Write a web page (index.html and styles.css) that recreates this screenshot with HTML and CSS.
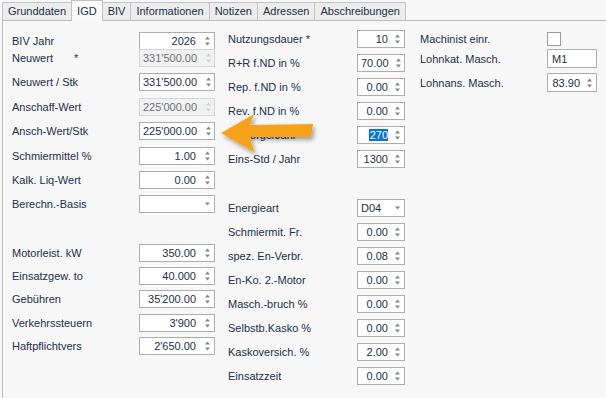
FILE: index.html
```html
<!DOCTYPE html>
<html lang="de">
<head>
<meta charset="utf-8">
<title>IGD</title>
<link rel="stylesheet" href="styles.css">
</head>
<body>
<div class="tabs">
  <div class="tab">Grunddaten</div>
  <div class="tab active">IGD</div>
  <div class="tab">BIV</div>
  <div class="tab">Informationen</div>
  <div class="tab">Notizen</div>
  <div class="tab">Adressen</div>
  <div class="tab">Abschreibungen</div>
</div>

<div class="panel">
  <div class="col col-left">
    <div class="grp grp-a">
      <div class="pair">
        <div class="row"><span class="lbl">BIV Jahr</span><div class="field spin"><span class="val">2026</span><svg class="sp" viewBox="0 0 7 14"><polygon points="1,5.5 3.5,2.5 6,5.5"/><polygon points="1,8.5 3.5,11.5 6,8.5"/></svg></div></div>
        <div class="row overlap"><span class="lbl">Neuwert<span class="req">*</span></span><div class="field spin disabled"><span class="val">331'500.00</span><svg class="sp" viewBox="0 0 7 14"><polygon points="1,5.5 3.5,2.5 6,5.5"/><polygon points="1,8.5 3.5,11.5 6,8.5"/></svg></div></div>
      </div>
      <div class="row"><span class="lbl">Neuwert / Stk</span><div class="field spin"><span class="val">331'500.00</span><svg class="sp" viewBox="0 0 7 14"><polygon points="1,5.5 3.5,2.5 6,5.5"/><polygon points="1,8.5 3.5,11.5 6,8.5"/></svg></div></div>
      <div class="row"><span class="lbl">Anschaff-Wert</span><div class="field spin disabled"><span class="val">225'000.00</span><svg class="sp" viewBox="0 0 7 14"><polygon points="1,5.5 3.5,2.5 6,5.5"/><polygon points="1,8.5 3.5,11.5 6,8.5"/></svg></div></div>
      <div class="row"><span class="lbl">Ansch-Wert/Stk</span><div class="field spin"><span class="val">225'000.00</span><svg class="sp" viewBox="0 0 7 14"><polygon points="1,5.5 3.5,2.5 6,5.5"/><polygon points="1,8.5 3.5,11.5 6,8.5"/></svg></div></div>
      <div class="row"><span class="lbl">Schmiermittel %</span><div class="field spin"><span class="val">1.00</span><svg class="sp" viewBox="0 0 7 14"><polygon points="1,5.5 3.5,2.5 6,5.5"/><polygon points="1,8.5 3.5,11.5 6,8.5"/></svg></div></div>
      <div class="row"><span class="lbl">Kalk. Liq-Wert</span><div class="field spin"><span class="val">0.00</span><svg class="sp" viewBox="0 0 7 14"><polygon points="1,5.5 3.5,2.5 6,5.5"/><polygon points="1,8.5 3.5,11.5 6,8.5"/></svg></div></div>
      <div class="row"><span class="lbl">Berechn.-Basis</span><div class="field combo"><span class="val"></span><svg class="dd" viewBox="0 0 7 4"><polygon points="1,0.5 6,0.5 3.5,3.5"/></svg></div></div>
    </div>
    <div class="grp grp-b">
      <div class="row"><span class="lbl">Motorleist. kW</span><div class="field spin"><span class="val">350.00</span><svg class="sp" viewBox="0 0 7 14"><polygon points="1,5.5 3.5,2.5 6,5.5"/><polygon points="1,8.5 3.5,11.5 6,8.5"/></svg></div></div>
      <div class="row"><span class="lbl">Einsatzgew. to</span><div class="field spin"><span class="val">40.000</span><svg class="sp" viewBox="0 0 7 14"><polygon points="1,5.5 3.5,2.5 6,5.5"/><polygon points="1,8.5 3.5,11.5 6,8.5"/></svg></div></div>
      <div class="row"><span class="lbl">Gebühren</span><div class="field spin"><span class="val">35'200.00</span><svg class="sp" viewBox="0 0 7 14"><polygon points="1,5.5 3.5,2.5 6,5.5"/><polygon points="1,8.5 3.5,11.5 6,8.5"/></svg></div></div>
      <div class="row"><span class="lbl">Verkehrssteuern</span><div class="field spin"><span class="val">3'900</span><svg class="sp" viewBox="0 0 7 14"><polygon points="1,5.5 3.5,2.5 6,5.5"/><polygon points="1,8.5 3.5,11.5 6,8.5"/></svg></div></div>
      <div class="row"><span class="lbl">Haftpflichtvers</span><div class="field spin"><span class="val">2'650.00</span><svg class="sp" viewBox="0 0 7 14"><polygon points="1,5.5 3.5,2.5 6,5.5"/><polygon points="1,8.5 3.5,11.5 6,8.5"/></svg></div></div>
    </div>
  </div>

  <div class="col col-mid">
    <div class="grp grp-a">
      <div class="row"><span class="lbl">Nutzungsdauer *</span><div class="field spin"><span class="val">10</span><svg class="sp" viewBox="0 0 7 14"><polygon points="1,5.5 3.5,2.5 6,5.5"/><polygon points="1,8.5 3.5,11.5 6,8.5"/></svg></div></div>
      <div class="row"><span class="lbl">R+R f.ND in %</span><div class="field spin"><span class="val">70.00</span><svg class="sp" viewBox="0 0 7 14"><polygon points="1,5.5 3.5,2.5 6,5.5"/><polygon points="1,8.5 3.5,11.5 6,8.5"/></svg></div></div>
      <div class="row"><span class="lbl">Rep. f.ND in %</span><div class="field spin"><span class="val">0.00</span><svg class="sp" viewBox="0 0 7 14"><polygon points="1,5.5 3.5,2.5 6,5.5"/><polygon points="1,8.5 3.5,11.5 6,8.5"/></svg></div></div>
      <div class="row"><span class="lbl">Rev. f.ND in %</span><div class="field spin"><span class="val">0.00</span><svg class="sp" viewBox="0 0 7 14"><polygon points="1,5.5 3.5,2.5 6,5.5"/><polygon points="1,8.5 3.5,11.5 6,8.5"/></svg></div></div>
      <div class="row"><span class="lbl">Vorsorge/Jahr</span><div class="field spin"><span class="val"><span class="sel">270</span></span><svg class="sp" viewBox="0 0 7 14"><polygon points="1,5.5 3.5,2.5 6,5.5"/><polygon points="1,8.5 3.5,11.5 6,8.5"/></svg></div></div>
      <div class="row"><span class="lbl">Eins-Std / Jahr</span><div class="field spin"><span class="val">1300</span><svg class="sp" viewBox="0 0 7 14"><polygon points="1,5.5 3.5,2.5 6,5.5"/><polygon points="1,8.5 3.5,11.5 6,8.5"/></svg></div></div>
    </div>
    <div class="grp grp-b">
      <div class="row"><span class="lbl">Energieart</span><div class="field combo"><span class="val">D04</span><svg class="dd" viewBox="0 0 7 4"><polygon points="1,0.5 6,0.5 3.5,3.5"/></svg></div></div>
      <div class="row"><span class="lbl">Schmiermit. Fr.</span><div class="field spin"><span class="val">0.00</span><svg class="sp" viewBox="0 0 7 14"><polygon points="1,5.5 3.5,2.5 6,5.5"/><polygon points="1,8.5 3.5,11.5 6,8.5"/></svg></div></div>
      <div class="row"><span class="lbl">spez. En-Verbr.</span><div class="field spin"><span class="val">0.08</span><svg class="sp" viewBox="0 0 7 14"><polygon points="1,5.5 3.5,2.5 6,5.5"/><polygon points="1,8.5 3.5,11.5 6,8.5"/></svg></div></div>
      <div class="row"><span class="lbl">En-Ko. 2.-Motor</span><div class="field spin"><span class="val">0.00</span><svg class="sp" viewBox="0 0 7 14"><polygon points="1,5.5 3.5,2.5 6,5.5"/><polygon points="1,8.5 3.5,11.5 6,8.5"/></svg></div></div>
      <div class="row"><span class="lbl">Masch.-bruch %</span><div class="field spin"><span class="val">0.00</span><svg class="sp" viewBox="0 0 7 14"><polygon points="1,5.5 3.5,2.5 6,5.5"/><polygon points="1,8.5 3.5,11.5 6,8.5"/></svg></div></div>
      <div class="row"><span class="lbl">Selbstb.Kasko %</span><div class="field spin"><span class="val">0.00</span><svg class="sp" viewBox="0 0 7 14"><polygon points="1,5.5 3.5,2.5 6,5.5"/><polygon points="1,8.5 3.5,11.5 6,8.5"/></svg></div></div>
      <div class="row"><span class="lbl">Kaskoversich. %</span><div class="field spin"><span class="val">2.00</span><svg class="sp" viewBox="0 0 7 14"><polygon points="1,5.5 3.5,2.5 6,5.5"/><polygon points="1,8.5 3.5,11.5 6,8.5"/></svg></div></div>
      <div class="row"><span class="lbl">Einsatzzeit</span><div class="field spin"><span class="val">0.00</span><svg class="sp" viewBox="0 0 7 14"><polygon points="1,5.5 3.5,2.5 6,5.5"/><polygon points="1,8.5 3.5,11.5 6,8.5"/></svg></div></div>
    </div>
  </div>

  <div class="col col-right">
    <div class="row"><span class="lbl">Machinist einr.</span><span class="check"></span></div>
    <div class="row tall first-tall"><span class="lbl">Lohnkat. Masch.</span><div class="field text"><span class="val">M1</span></div></div>
    <div class="row tall"><span class="lbl">Lohnans. Masch.</span><div class="field spin"><span class="val">83.90</span><svg class="sp" viewBox="0 0 7 14"><polygon points="1,5.5 3.5,2.5 6,5.5"/><polygon points="1,8.5 3.5,11.5 6,8.5"/></svg></div></div>
  </div>
</div>

<svg class="arrow" width="606" height="398" viewBox="0 0 606 398">
  <defs>
    <filter id="sh" x="-20%" y="-40%" width="150%" height="200%">
      <feDropShadow dx="2" dy="3" stdDeviation="2" flood-color="#000" flood-opacity="0.35"/>
    </filter>
  </defs>
  <polygon filter="url(#sh)" fill="#f8a21c" points="221,133 254,114 250,125 313,124 311,137 250,137 254,152"/>
</svg>
</body>
</html>
```

FILE: styles.css
```css
* { box-sizing: border-box; }

html, body {
  margin: 0;
  padding: 0;
  width: 606px;
  height: 398px;
  overflow: hidden;
}

body {
  background: #f7f7f7;
  font-family: "Liberation Sans", Arial, sans-serif;
  font-size: 11px;
  color: #22304c;
}

/* ---------- tabs ---------- */
.tabs {
  display: flex;
  align-items: flex-end;
  height: 20px;
  padding-left: 3px;
}

.tab {
  height: 18px;
  line-height: 16px;
  padding: 0 5px;
  margin-left: -1px;
  border: 1px solid #c2c2c2;
  border-bottom: none;
  background: #ececec;
  white-space: nowrap;
}

.tab.active {
  height: 21px;
  line-height: 20px;
  margin-bottom: -1px;
  background: #fafafa;
  position: relative;
  z-index: 1;
}

/* ---------- panel ---------- */
.panel {
  display: flex;
  margin-left: 2px;
  height: 378px;
  border-top: 1px solid #bdbdbd;
  border-left: 1px solid #bdbdbd;
}

.col {
  display: flex;
  flex-direction: column;
}

.grp {
  display: flex;
  flex-direction: column;
}

.row {
  display: flex;
  align-items: center;
  height: 18px;
  white-space: nowrap;
}

.pair {
  display: flex;
  flex-direction: column;
}

.row.overlap { margin-top: -1px; }

.req { margin-left: 21px; }

/* left column */
.col-left { padding: 11px 0 0 9px; }
.col-left .lbl { width: 127px; }
.col-left .field { width: 76px; }
.col-left .grp-a { gap: 6.4px; }
.col-left .grp-b { gap: 5.25px; margin-top: 30.6px; }

/* middle column */
.col-mid { padding: 9px 0 0 13px; }
.col-mid .lbl { width: 129px; }
.col-mid .field { width: 48px; }
.col-mid .grp-a { gap: 6px; }
.col-mid .grp-b { gap: 6px; margin-top: 31px; }

/* right column */
.col-right { padding: 9px 0 0 15px; }
.col-right .lbl { width: 127px; }
.col-right .field { width: 50px; }
.col-right .row.tall { height: 19px; margin-top: 5px; }
.col-right .row.first-tall { margin-top: 1px; }

/* ---------- fields ---------- */
.field {
  display: flex;
  align-items: center;
  height: 18px;
  border: 1px solid #adadad;
  background: #ffffff;
  padding: 0 3px 0 3px;
  color: #22304c;
}

.field .val {
  flex: 1;
  text-align: right;
  line-height: 14px;
}

.field.combo .val,
.field.text .val {
  text-align: left;
}

.col-right .field.text .val { padding-left: 1px; }

.col-right .field { height: 19px; }

.sp {
  width: 7px;
  height: 14px;
  margin-left: 8px;
  flex: none;
}
.col-mid .sp, .col-right .sp { margin-left: 6px; }

.sp polygon { fill: #858585; }

.dd {
  width: 7px;
  height: 4px;
  margin-left: 6px;
  flex: none;
}
.dd polygon { fill: #8a8a8a; }

.field.disabled {
  background: #f1f1f1;
  border-color: #d6d6d6;
  color: #6c6f76;
}
.field.disabled .sp polygon { fill: #cfcfcf; }

.sel {
  background: #0a74d6;
  color: #ffffff;
  padding: 0 0 0 1px;
}

.check {
  width: 14px;
  height: 14px;
  border: 1px solid #9c9c9c;
  background: #ffffff;
}

/* ---------- arrow overlay ---------- */
.arrow {
  position: absolute;
  left: 0;
  top: 0;
  pointer-events: none;
}
```
